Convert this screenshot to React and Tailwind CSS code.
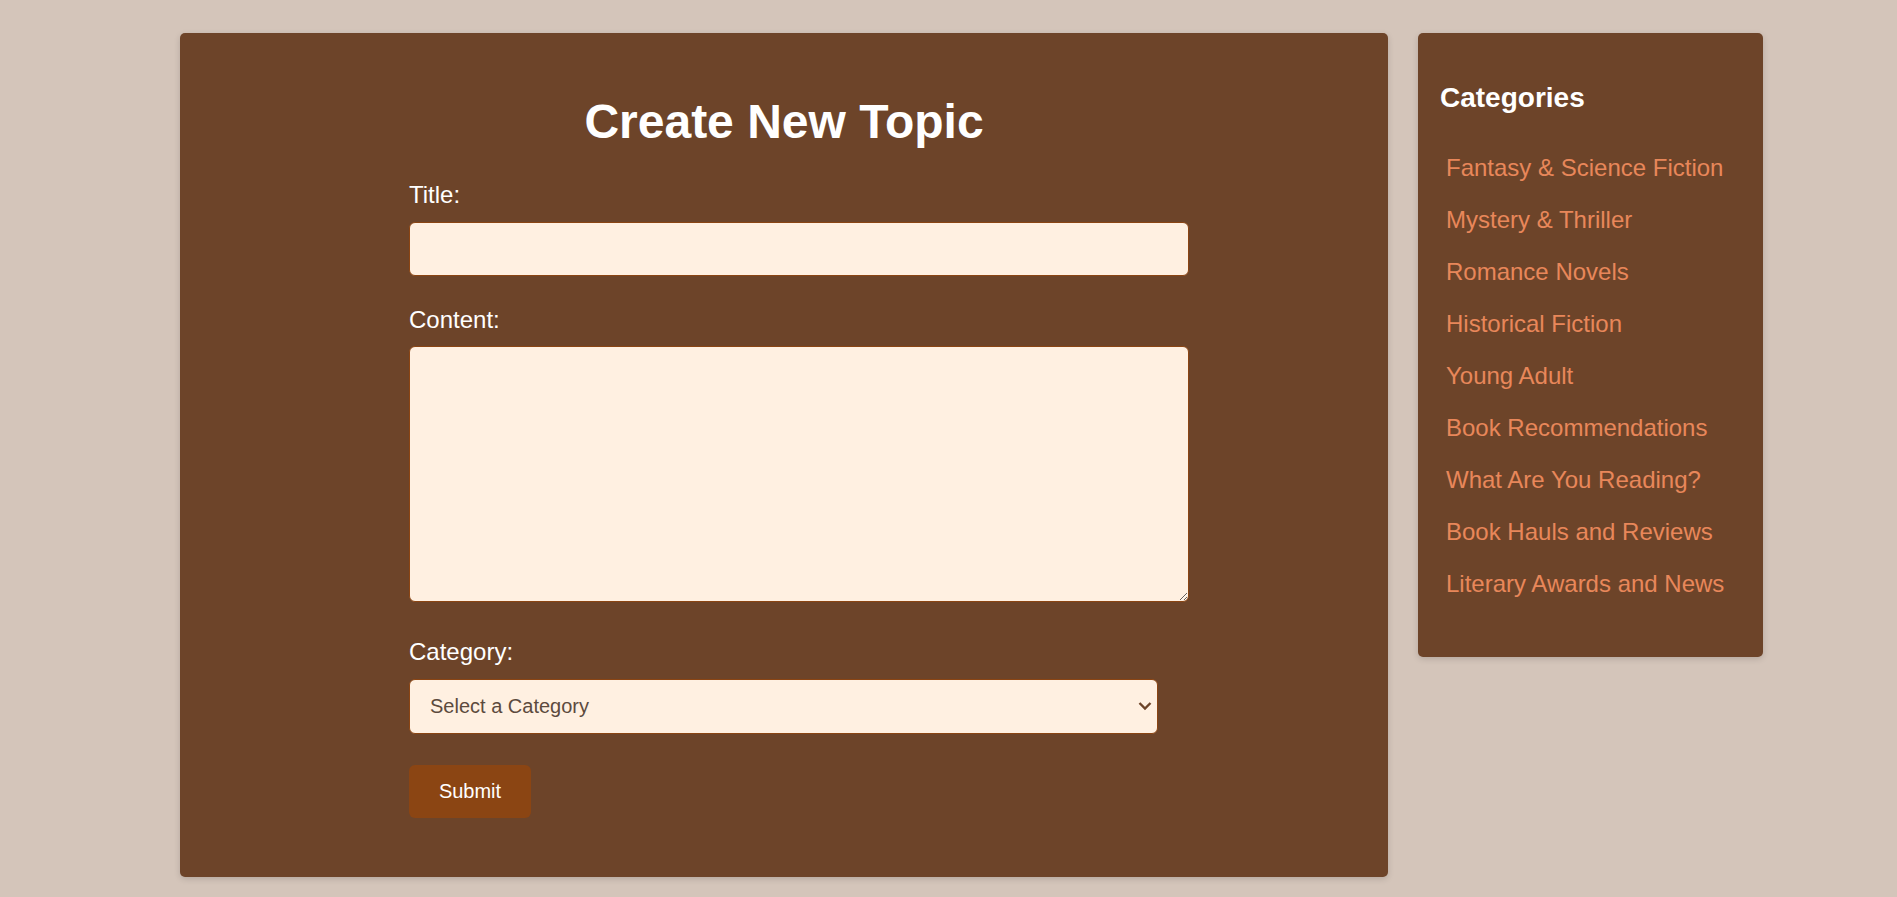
import React, { useState } from 'react';

const categories = [
  'Fantasy & Science Fiction',
  'Mystery & Thriller',
  'Romance Novels',
  'Historical Fiction',
  'Young Adult',
  'Book Recommendations',
  'What Are You Reading?',
  'Book Hauls and Reviews',
  'Literary Awards and News',
];

const App = () => {
  const [title, setTitle] = useState('');
  const [content, setContent] = useState('');
  const [category, setCategory] = useState('');

  return (
    <div className="min-h-screen bg-[#d4c5ba] font-['Liberation_Sans',Arial,sans-serif]">
      <div className="flex items-start gap-[30px] pl-[180px] pt-[33px] pb-[16px]">
        {/* Main form panel */}
        <main className="w-[1208px] bg-[#6d4429] rounded-[5px] shadow-[0_2px_6px_rgba(0,0,0,0.15)] pt-[65px] pb-[59px]">
          <h1 className="text-[48px] font-bold leading-none text-center text-white mb-[35px]">
            Create New Topic
          </h1>

          <form className="w-[748px] ml-[229px]" onSubmit={(e) => e.preventDefault()}>
            <label className="block text-[24px] leading-[27.6px] text-white mb-[13px]">Title:</label>
            <input
              type="text"
              value={title}
              onChange={(e) => setTitle(e.target.value)}
              className="block w-[780px] h-[54px] px-[15px] text-[20px] bg-[#fff0e1] border border-[#8b4513] rounded-[6px] outline-none"
            />

            <label className="block text-[24px] leading-[27.6px] text-white mt-[30px] mb-[13px]">Content:</label>
            <textarea
              value={content}
              onChange={(e) => setContent(e.target.value)}
              className="block w-[780px] h-[256px] p-[15px] text-[20px] bg-[#fff0e1] border border-[#8b4513] rounded-[6px] outline-none"
            />

            <label className="block text-[24px] leading-[27.6px] text-white mt-[36px] mb-[13px]">Category:</label>
            <div className="relative w-[749px]">
              <select
                value={category}
                onChange={(e) => setCategory(e.target.value)}
                className="block w-full h-[55px] pl-[20px] pr-[40px] text-[20px] text-[#5c4a3d] bg-[#fff0e1] border border-[#8b4513] rounded-[6px] appearance-none outline-none"
              >
                <option value="">Select a Category</option>
                {categories.map((c) => (
                  <option key={c} value={c}>{c}</option>
                ))}
              </select>
              <svg
                className="absolute right-[6px] top-1/2 -translate-y-1/2 pointer-events-none"
                width="14"
                height="9"
                viewBox="0 0 14 9"
                fill="none"
              >
                <path d="M1.5 1.5 L7 7 L12.5 1.5" stroke="#6d4429" strokeWidth="2.4" />
              </svg>
            </div>

            <button
              type="submit"
              className="mt-[31px] w-[122px] h-[53px] bg-[#8b4513] text-white text-[20px] rounded-[6px]"
            >
              Submit
            </button>
          </form>
        </main>

        {/* Sidebar */}
        <aside className="w-[345px] bg-[#6d4429] rounded-[5px] shadow-[0_2px_6px_rgba(0,0,0,0.15)] pt-[49px] pb-[47px] px-[22px]">
          <h3 className="text-[28px] font-bold leading-[32px] text-white mb-[28px]">Categories</h3>
          <ul>
            {categories.map((c) => (
              <li key={c} className="h-[52px] flex items-center pl-[6px]">
                <span className="text-[24px] leading-[27.6px] text-[#e8875a] cursor-pointer">{c}</span>
              </li>
            ))}
          </ul>
        </aside>
      </div>
    </div>
  );
};

export default App;
